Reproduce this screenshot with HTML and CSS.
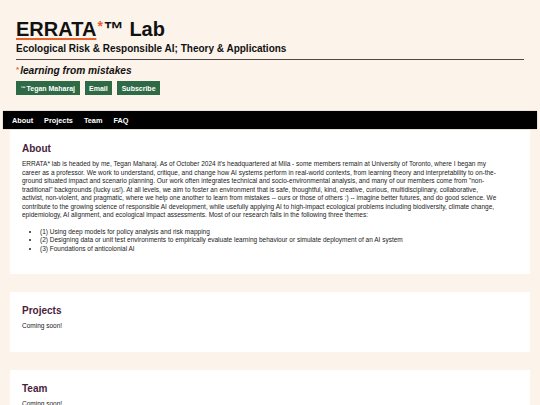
FILE: index.html
```html
<!DOCTYPE html>
<html lang="en">
<head>
<meta charset="utf-8">
<title>ERRATA Lab</title>
<link rel="stylesheet" href="styles.css">
</head>
<body>
<header class="masthead">
  <h1 class="title"><a class="brand" href="#">ERRATA</a><span class="star">*</span>™ Lab</h1>
  <p class="subtitle">Ecological Risk &amp; Responsible AI; Theory &amp; Applications</p>
  <hr class="rule">
  <p class="tagline"><span class="star">*</span>learning from mistakes</p>
  <div class="links">
    <a class="btn" href="#"><span class="tm">™</span> Tegan Maharaj</a>
    <a class="btn" href="#">Email</a>
    <a class="btn" href="#">Subscribe</a>
  </div>
</header>

<nav class="topnav">
  <a href="#about">About</a>
  <a href="#projects">Projects</a>
  <a href="#team">Team</a>
  <a href="#faq">FAQ</a>
</nav>

<main class="sections">
  <section class="card" id="about">
    <h2>About</h2>
    <p>ERRATA* lab is headed by me, Tegan Maharaj. As of October 2024 it's headquartered at Mila - some members remain at University of Toronto, where I began my career as a professor. We work to understand, critique, and change how AI systems perform in real-world contexts, from learning theory and interpretability to on-the-ground situated impact and scenario planning. Our work often integrates technical and socio-environmental analysis, and many of our members come from "non-traditional" backgrounds (lucky us!). At all levels, we aim to foster an environment that is safe, thoughtful, kind, creative, curious, multidisciplinary, collaborative, activist, non-violent, and pragmatic, where we help one another to learn from mistakes -- ours or those of others :) -- imagine better futures, and do good science. We contribute to the growing science of responsible AI development, while usefully applying AI to high-impact ecological problems including biodiversity, climate change, epidemiology, AI alignment, and ecological impact assessments. Most of our research falls in the following three themes:</p>
    <ul>
      <li>(1) Using deep models for policy analysis and risk mapping</li>
      <li>(2) Designing data or unit test environments to empirically evaluate learning behaviour or simulate deployment of an AI system</li>
      <li>(3) Foundations of anticolonial AI</li>
    </ul>
  </section>

  <section class="card" id="projects">
    <h2>Projects</h2>
    <p>Coming soon!</p>
  </section>

  <section class="card" id="team">
    <h2>Team</h2>
    <p>Coming soon!</p>
  </section>
</main>
</body>
</html>
```

FILE: styles.css
```css
html, body {
  margin: 0;
  padding: 0;
}

body {
  background: #fcf4eb;
  color: #111;
  font-family: "Liberation Sans", Arial, sans-serif;
}

/* masthead */
.masthead {
  padding: 16px 16px 0;
}

.title {
  margin: 0;
  font-size: 20px;
  line-height: 20px;
  font-weight: 700;
  color: #111;
}

.brand {
  color: #111;
  text-decoration: underline;
  text-decoration-color: #e5622b;
  text-decoration-thickness: 2px;
  text-underline-offset: 2px;
}

.star {
  color: #e5622b;
}

.title .star {
  font-size: 14px;
  vertical-align: 5px;
  margin: 0 1px;
}

.subtitle {
  margin: 3px 0 0;
  font-size: 10px;
  line-height: 14px;
  font-weight: 700;
}

.rule {
  margin: 3px 0 0;
  border: 0;
  border-top: 1.5px solid #4a4a4a;
  height: 0;
}

.tagline {
  margin: 3px 0 0;
  font-size: 10.2px;
  line-height: 14px;
  font-weight: 700;
  font-style: italic;
}

.tagline .star {
  font-style: normal;
  font-size: 8px;
  vertical-align: 2px;
  margin-right: 1px;
}

.links {
  display: flex;
  gap: 5px;
  margin-top: 3px;
}

.btn {
  display: inline-flex;
  align-items: center;
  height: 14px;
  padding: 0 4.5px;
  background: #2f6a46;
  color: #fff;
  font-size: 7px;
  font-weight: 700;
  text-decoration: none;
}

.btn .tm {
  font-size: 5px;
  margin-right: 1px;
}

/* navigation bar */
.topnav {
  display: flex;
  gap: 11px;
  align-items: center;
  height: 18px;
  margin: 16px 3px 0;
  padding: 0 9px;
  background: #000;
  box-shadow: 0 0 1px #888;
}

.topnav a {
  color: #fff;
  font-size: 7.3px;
  font-weight: 700;
  text-decoration: none;
}

/* content cards */
.sections {
  display: flex;
  flex-direction: column;
  gap: 18px;
  margin: 1px 10px 0;
}

.card {
  background: #fff;
  padding: 13px 30px 13px 12px;
  font-size: 6.5px;
  line-height: 8.5px;
  color: #222;
}

.card h2 {
  margin: 0 0 5px;
  font-size: 10px;
  line-height: 12px;
  color: #4a1c3c;
}

.card p {
  margin: 0 0 8px;
}

.card ul {
  margin: 8px 0;
  padding-left: 18px;
}
```
